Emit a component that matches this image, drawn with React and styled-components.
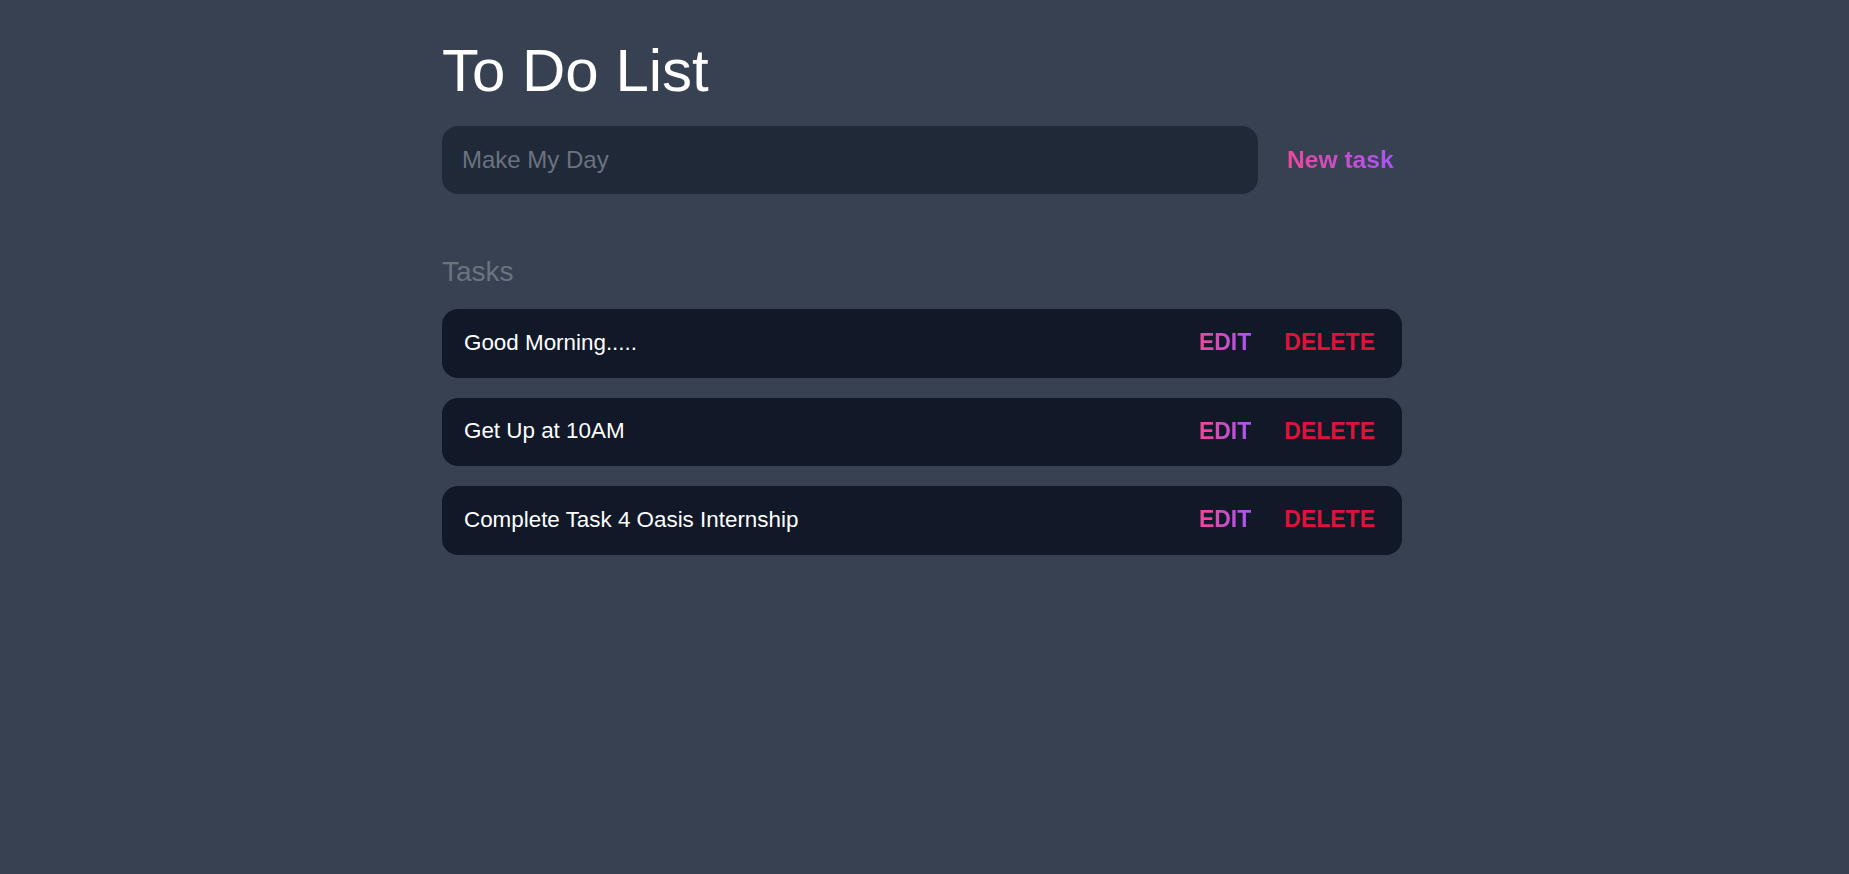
import React, { useState } from "react";
import styled, { createGlobalStyle } from "styled-components";

const GlobalStyle = createGlobalStyle`
  html, body {
    margin: 0;
    padding: 0;
    background-color: #374151;
    font-family: "Liberation Sans", Arial, sans-serif;
  }
`;

const Page = styled.div`
  min-height: 100vh;
  background-color: #374151;
  padding-top: 37px;
  box-sizing: border-box;
`;

const Wrapper = styled.div`
  width: 960px;
  margin-left: calc(50% - 482.5px);
`;

const Title = styled.h1`
  margin: 0;
  font-size: 60px;
  font-weight: 400;
  line-height: 67px;
  color: #ffffff;
`;

const Form = styled.form`
  display: flex;
  align-items: center;
  gap: 29px;
  margin-top: 22px;
`;

const Input = styled.input`
  flex: 1;
  height: 68px;
  box-sizing: border-box;
  padding: 0 20px;
  border: none;
  border-radius: 16px;
  background-color: #1f2937;
  color: #ffffff;
  font-family: inherit;
  font-size: 24px;
  outline: none;

  &::placeholder {
    color: #6b7280;
  }
`;

const GradientText = styled.span`
  background: linear-gradient(to right, #ec4899, #a855f7);
  -webkit-background-clip: text;
  background-clip: text;
  color: transparent;
`;

const NewButton = styled.button`
  width: 115px;
  padding: 0;
  border: none;
  background: none;
  text-align: left;
  font-family: inherit;
  font-size: 24.6px;
  font-weight: 700;
  cursor: pointer;
`;

const SectionTitle = styled.h2`
  margin: 62px 0 0;
  font-size: 28px;
  font-weight: 400;
  line-height: 31px;
  color: #6b7280;
`;

const List = styled.div`
  display: flex;
  flex-direction: column;
  gap: 20px;
  margin-top: 22px;
`;

const Row = styled.div`
  display: flex;
  align-items: center;
  justify-content: space-between;
  height: 68.5px;
  padding: 0 27px 1px 22px;
  box-sizing: border-box;
  border-radius: 16px;
  background-color: #111827;
`;

const TaskText = styled.span`
  font-size: 22.4px;
  color: #ffffff;
`;

const Actions = styled.div`
  display: flex;
  align-items: center;
  gap: 33px;
`;

const ActionButton = styled.button`
  padding: 0;
  border: none;
  background: none;
  font-family: inherit;
  font-size: 23px;
  font-weight: 700;
  text-transform: uppercase;
  color: ${(p) => (p.$danger ? "#dc143c" : "inherit")};
  cursor: pointer;
`;

const initialTasks = [
  "Good Morning.....",
  "Get Up at 10AM",
  "Complete Task 4 Oasis Internship",
];

export default function App() {
  const [tasks, setTasks] = useState(initialTasks);
  const [value, setValue] = useState("");

  const addTask = (e) => {
    e.preventDefault();
    if (!value.trim()) return;
    setTasks([...tasks, value]);
    setValue("");
  };

  return (
    <Page>
      <GlobalStyle />
      <Wrapper>
        <Title>To Do List</Title>
        <Form onSubmit={addTask}>
          <Input
            placeholder="Make My Day"
            value={value}
            onChange={(e) => setValue(e.target.value)}
          />
          <NewButton type="submit">
            <GradientText>New task</GradientText>
          </NewButton>
        </Form>
        <SectionTitle>Tasks</SectionTitle>
        <List>
          {tasks.map((task, i) => (
            <Row key={i}>
              <TaskText>{task}</TaskText>
              <Actions>
                <ActionButton>
                  <GradientText>Edit</GradientText>
                </ActionButton>
                <ActionButton
                  $danger
                  onClick={() => setTasks(tasks.filter((_, j) => j !== i))}
                >
                  Delete
                </ActionButton>
              </Actions>
            </Row>
          ))}
        </List>
      </Wrapper>
    </Page>
  );
}
